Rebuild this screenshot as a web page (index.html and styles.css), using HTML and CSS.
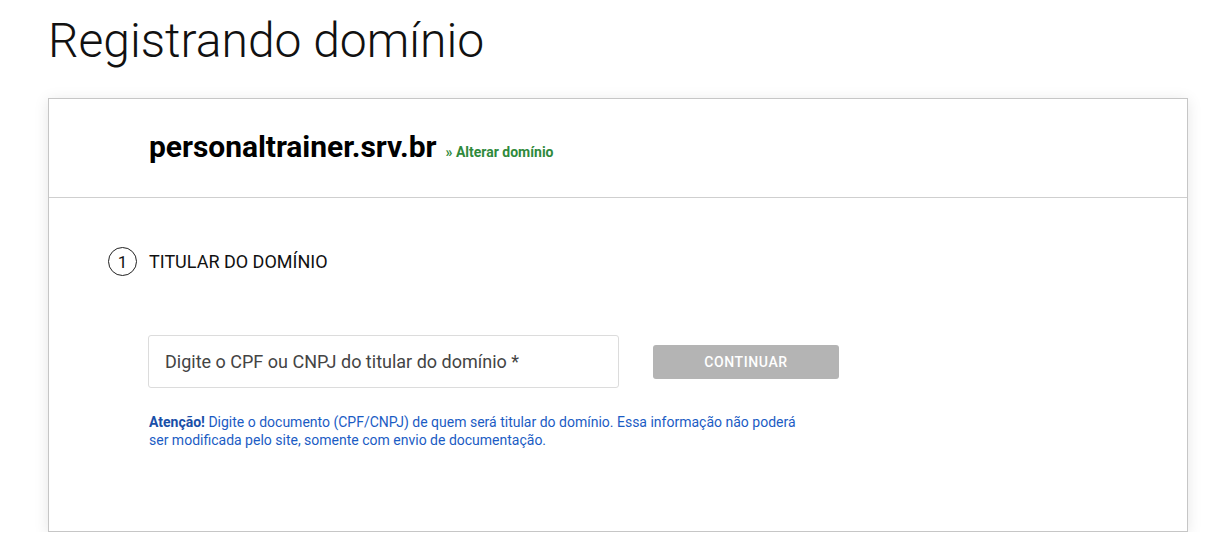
FILE: index.html
```html
<!DOCTYPE html>
<html lang="pt-BR">
<head>
<meta charset="utf-8">
<title>Registrando domínio</title>
<link rel="stylesheet" href="styles.css">
</head>
<body>
<main class="page">
  <h1 class="page-title">Registrando domínio</h1>
  <section class="card">
    <header class="card-head">
      <span class="domain">personaltrainer.srv.br</span>
      <a class="change-link" href="#">» Alterar domínio</a>
    </header>
    <div class="card-body">
      <div class="step">
        <span class="step-num">1</span>
        <span class="step-title">TITULAR DO DOMÍNIO</span>
      </div>
      <div class="form-row">
        <input class="doc-input" type="text" placeholder="Digite o CPF ou CNPJ do titular do domínio *">
        <button class="btn-continue" type="button">CONTINUAR</button>
      </div>
      <p class="note"><strong>Atenção!</strong> Digite o documento (CPF/CNPJ) de quem será titular do domínio. Essa informação não poderá ser modificada pelo site, somente com envio de documentação.</p>
    </div>
  </section>
</main>
</body>
</html>
```

FILE: styles.css
```css
* { box-sizing: border-box; }
html, body { margin: 0; padding: 0; background: #fff; }
body { font-family: Roboto, "Liberation Sans", Arial, sans-serif; color: #000; }

.page { padding: 13px 35px 0 48px; }

.page-title {
  margin: 0 0 29px 0;
  font-size: 48px;
  font-weight: 300;
  line-height: 56px;
  color: #111;
}

.card {
  width: 1140px;
  height: 434px;
  border: 1px solid #c6c6c6;
  background: #fff;
  box-shadow: 0 2px 14px rgba(0,0,0,0.10);
}

.card-head {
  height: 99px;
  border-bottom: 1px solid #cfcfcf;
  padding: 30px 0 0 100px;
  display: flex;
  align-items: baseline;
  gap: 9px;
}

.domain {
  font-size: 30px;
  font-weight: 700;
  line-height: 35px;
  letter-spacing: -0.05px;
  color: #000;
}

.change-link {
  font-size: 14px;
  font-weight: 700;
  color: #2f8a3c;
  text-decoration: none;
}

.card-body { padding: 49px 0 0 100px; }

.step {
  display: flex;
  align-items: center;
  gap: 12px;
  margin-left: -41px;
}

.step-num {
  width: 29px;
  height: 29px;
  border: 1px solid #222;
  border-radius: 50%;
  display: flex;
  align-items: center;
  justify-content: center;
  font-size: 17px;
  color: #111;
}

.step-title { font-size: 18px; color: #111; }

.form-row {
  display: flex;
  align-items: center;
  gap: 34px;
  margin: 59px 0 0 -1px;
}

.doc-input {
  width: 471px;
  height: 53px;
  border: 1px solid #dcdcdc;
  border-radius: 3px;
  padding: 0 15px 0 16px;
  font-family: Roboto, "Liberation Sans", Arial, sans-serif;
  font-size: 18px;
  color: #333;
  outline: none;
}
.doc-input::placeholder { color: #444; opacity: 1; }

.btn-continue {
  width: 186px;
  height: 34px;
  border: none;
  border-radius: 3px;
  background: #b4b4b4;
  color: #fff;
  font-family: Roboto, "Liberation Sans", Arial, sans-serif;
  font-size: 14px;
  font-weight: 500;
  letter-spacing: 0.6px;
  margin-top: 1px;
}

.note {
  width: 660px;
  margin: 25px 0 0 0;
  font-size: 14px;
  line-height: 18px;
  color: #1b5cc4;
}
.note strong { font-weight: 700; color: #1a4fa8; }
```
